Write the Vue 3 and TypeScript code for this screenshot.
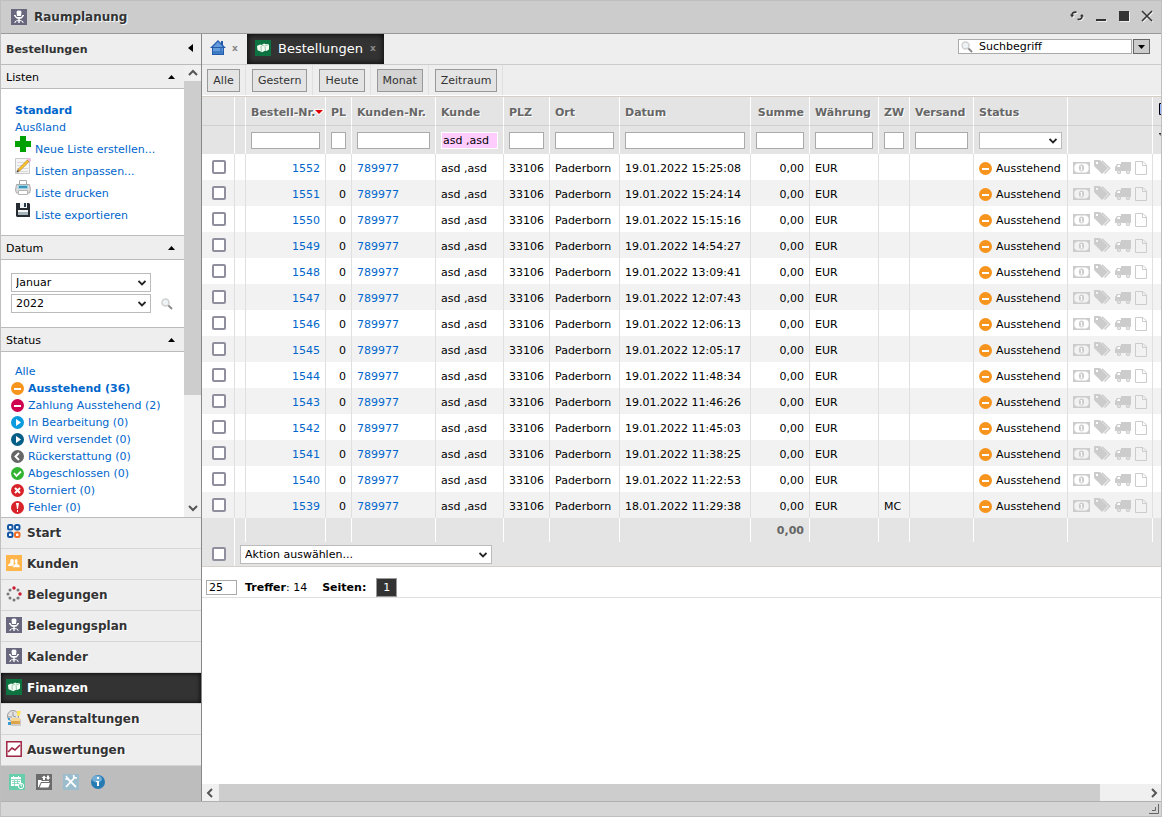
<script setup lang="ts">
import { ref } from 'vue'

interface Column {
  key: string
  label: string
  width: number
  filter: 'none' | 'text' | 'select'
}

interface Order {
  nr: number
  date: string
  payment: string
}

const columns: Column[] = [
  { key: 'check', label: '', width: 33, filter: 'none' },
  { key: 'gap', label: '', width: 11, filter: 'none' },
  { key: 'nr', label: 'Bestell-Nr.', width: 80, filter: 'text' },
  { key: 'pl', label: 'PL', width: 26, filter: 'text' },
  { key: 'customerNr', label: 'Kunden-Nr.', width: 84, filter: 'text' },
  { key: 'customer', label: 'Kunde', width: 68, filter: 'text' },
  { key: 'zip', label: 'PLZ', width: 46, filter: 'text' },
  { key: 'city', label: 'Ort', width: 70, filter: 'text' },
  { key: 'date', label: 'Datum', width: 131, filter: 'text' },
  { key: 'sum', label: 'Summe', width: 59, filter: 'text' },
  { key: 'currency', label: 'Währung', width: 69, filter: 'text' },
  { key: 'zw', label: 'ZW', width: 31, filter: 'text' },
  { key: 'shipping', label: 'Versand', width: 64, filter: 'text' },
  { key: 'status', label: 'Status', width: 94, filter: 'select' },
  { key: 'icons', label: '', width: 85, filter: 'none' },
  { key: 'config', label: '', width: 60, filter: 'none' },
]

const orders: Order[] = [
  ['19.01.2022 15:25:08', ''],
  ['19.01.2022 15:24:14', ''],
  ['19.01.2022 15:15:16', ''],
  ['19.01.2022 14:54:27', ''],
  ['19.01.2022 13:09:41', ''],
  ['19.01.2022 12:07:43', ''],
  ['19.01.2022 12:06:13', ''],
  ['19.01.2022 12:05:17', ''],
  ['19.01.2022 11:48:34', ''],
  ['19.01.2022 11:46:26', ''],
  ['19.01.2022 11:45:03', ''],
  ['19.01.2022 11:38:25', ''],
  ['19.01.2022 11:22:53', ''],
  ['18.01.2022 11:29:38', 'MC'],
].map(([date, payment], i) => ({ nr: 1552 - i, date, payment }))

const filters = ref<Record<string, string>>({ customer: 'asd ,asd' })

const listActions = [
  { icon: 'plus', label: 'Neue Liste erstellen...' },
  { icon: 'edit', label: 'Listen anpassen...' },
  { icon: 'print', label: 'Liste drucken' },
  { icon: 'save', label: 'Liste exportieren' },
]

const states = [
  { icon: 'pending', label: 'Ausstehend (36)', active: true },
  { icon: 'payment', label: 'Zahlung Ausstehend (2)' },
  { icon: 'progress', label: 'In Bearbeitung (0)' },
  { icon: 'shipped', label: 'Wird versendet (0)' },
  { icon: 'refund', label: 'Rückerstattung (0)' },
  { icon: 'done', label: 'Abgeschlossen (0)' },
  { icon: 'cancel', label: 'Storniert (0)' },
  { icon: 'error', label: 'Fehler (0)' },
]

const modules = [
  { icon: 'start', label: 'Start' },
  { icon: 'people', label: 'Kunden' },
  { icon: 'ring', label: 'Belegungen' },
  { icon: 'chair', label: 'Belegungsplan' },
  { icon: 'chair', label: 'Kalender' },
  { icon: 'cash', label: 'Finanzen', active: true },
  { icon: 'event', label: 'Veranstaltungen' },
  { icon: 'chart', label: 'Auswertungen' },
]

const ranges = ['Alle', 'Gestern', 'Heute', 'Monat', 'Zeitraum']
const tools = [
  { icon: 'schedule', label: 'Termine' },
  { icon: 'transfer', label: 'Import und Export' },
  { icon: 'settings', label: 'Einstellungen' },
  { icon: 'info', label: 'Information' },
]
const search = ref('Suchbegriff')
const pageSize = ref('25')
</script>

<template>
  <div class="window">
    <svg class="symbols" aria-hidden="true">
      <symbol id="chair" viewBox="0 0 16 16">
        <path fill="#69677d" d="M0 0h16v16H0z" />
        <path fill="#fff" d="M5.500 3Q5.700 1.600 8 1.600T10.500 3L10 7H6z" />
        <path fill="none" stroke="#fff" stroke-width="1.200" d="M3 6.600h1.200Q4.600 9 8 9t3.800-2.400H13" />
        <path fill="#fff" d="M5.500 8h5v1.600h-5zM7.300 9h1.400v5H7.300z" />
        <path fill="none" stroke="#fff" d="M4 14v-1.200Q5 11.500 8 11.500t4 1.300V14" />
      </symbol>
      <symbol id="cash" viewBox="0 0 16 16">
        <path fill="#0d7340" d="M0 0h16v16H0z" />
        <path fill="#f5fff5" d="M2 6l3-1.600 1.600.6L9 3.500l1.600.7L12.500 4l1.500.8v4.700L11.500 11l-1-.4L7 12.300l-2-1-2.500-1z" />
        <path stroke="#75b68c" stroke-width=".7" fill="none" d="M5.500 6.700L9 5M6 7l.3 4.500M10 5.500l.4 4.700M10.500 5.700L13 5" />
      </symbol>
      <symbol id="home" viewBox="0 0 16 16">
        <path fill="#245baa" d="M8 0L0 8h2v7h12V8h2l-3-3V1h-2v2z" />
        <path fill="#659ddc" d="M8 1.700L2.800 7H13L8 1.700zM3 8h10v6H3z" />
        <path fill="#3f7bc3" d="M3 11h10v3H3zM10 8h2v6h-2z" />
      </symbol>
      <symbol id="plus" viewBox="0 0 16 16"><path fill="#00a000" d="M5 0h6v5h5v6h-5v5H5v-5H0V5h5z" /></symbol>
      <symbol id="edit" viewBox="0 0 16 16">
        <path fill="#f5f5f5" stroke="#c9c9c9" d="M.5.500h14v15H.5z" />
        <path stroke="#d8d8d8" d="M2 4.500h8M2 7.500h8M2 10.500h11M5 13.500h8" />
        <path stroke="#aa8138" stroke-width="2.800" d="M3 13L13.500 2.500" />
        <path stroke="#ffc32b" stroke-width="1.800" d="M4 12L13 3" />
        <path fill="#efb9e3" d="M13 0h2l1 1v2l-1 1-3-3z" /><path fill="#444" d="M2 12l2 2-2.500.5z" />
      </symbol>
      <symbol id="print" viewBox="0 0 16 16">
        <path fill="#fff" stroke="#a8a8a8" d="M4.500.500h7V6h-7z" />
        <path fill="#ddd" stroke="#aaa" d="M1.500 4.500h13l1 5-1 3.500h-13L.5 10z" />
        <path fill="#9bd3e6" d="M3 5h10v4H3z" /><path fill="#3d93b8" d="M4 6h8v2H4z" />
        <path fill="#fff" stroke="#b5b5b5" d="M3.500 10.500h9v4h-9z" />
      </symbol>
      <symbol id="save" viewBox="0 0 16 16">
        <path fill="#252b30" d="M1 1h13l1 1v13H2l-1-1z" /><path fill="#edf2f5" d="M5 1h7v5H5z" />
        <path fill="#24384a" d="M9 1h2v4H9z" /><path fill="#a5b3bb" d="M3 8h10v5H3z" /><path fill="#f5f5f5" d="M3 8h10v2H3z" />
      </symbol>
      <symbol id="pending" viewBox="0 0 13 13"><circle cx="6.5" cy="6.5" r="6.5" fill="#f7941d" /><path fill="#fff" d="M3 6h7v2H3z" /></symbol>
      <symbol id="payment" viewBox="0 0 13 13"><circle cx="6.5" cy="6.5" r="6.5" fill="#cf004f" /><path fill="#fff" d="M3 6h7v2H3z" /></symbol>
      <symbol id="progress" viewBox="0 0 13 13"><circle cx="6.5" cy="6.5" r="6.5" fill="#0b9add" /><path fill="#fff" d="M5 3l5 3.500L5 10z" /></symbol>
      <symbol id="shipped" viewBox="0 0 13 13"><circle cx="6.5" cy="6.5" r="6.5" fill="#055f86" /><path fill="#fff" d="M5 3l5 3.500L5 10z" /></symbol>
      <symbol id="refund" viewBox="0 0 13 13"><circle cx="6.5" cy="6.5" r="6.5" fill="#666" /><path fill="none" stroke="#fff" stroke-width="2" d="M8 3L4.500 6.500 8 10" /></symbol>
      <symbol id="done" viewBox="0 0 13 13"><circle cx="6.5" cy="6.5" r="6.5" fill="#32b432" /><path fill="none" stroke="#fff" stroke-width="1.800" d="M3 6l2.500 3L10 4.500" /></symbol>
      <symbol id="cancel" viewBox="0 0 13 13"><circle cx="6.5" cy="6.5" r="6.5" fill="#d8232a" /><path stroke="#fff" stroke-width="2" d="M4 4l5 5M9 4L4 9" /></symbol>
      <symbol id="error" viewBox="0 0 13 13"><circle cx="6.5" cy="6.5" r="6.5" fill="#d8232a" /><path fill="#fff" d="M5 2h3L7 8H6zM6 9h1v2H6z" /></symbol>
      <symbol id="start" viewBox="0 0 16 16">
        <g fill="#fff" stroke-width="2"><rect x="2" y="1" width="4.500" height="4.500" rx="1.500" stroke="#1255a4" /><rect x="9" y="1" width="4.500" height="4.500" rx="1.500" stroke="#1255a4" /><rect x="2" y="8.500" width="4.500" height="4.500" rx="1.500" stroke="#1255a4" /><rect x="9" y="8.500" width="4.500" height="4.500" rx="1.500" stroke="#f36c21" /></g>
      </symbol>
      <symbol id="people" viewBox="0 0 16 16">
        <path fill="#ffb54a" d="M0 0h16v16H0z" />
        <path fill="#fff" d="M2 11q0-2.500 2.600-3Q3.500 4 6 4t1.600 4l.4 3z" />
        <path fill="#fff" stroke="#ffb54a" stroke-width=".6" d="M6.500 12.500q0-3 2.700-3.500Q7.500 4 10 3.800T11.600 9q2.700.5 2.700 3.500z" />
      </symbol>
      <symbol id="ring" viewBox="0 0 16 16">
        <g fill="#777"><circle cx="12" cy="4" r="1.500" /><circle cx="12" cy="12" r="1.600" /><circle cx="8" cy="14" r="1.500" /><circle cx="4" cy="12" r="1.500" /><circle cx="2" cy="8" r="1.500" /><circle cx="4" cy="4" r="1.500" /></g>
        <g fill="#d01831"><circle cx="8" cy="2" r="1.700" /><circle cx="14" cy="8" r="1.700" /></g>
      </symbol>
      <symbol id="event" viewBox="0 0 16 16">
        <circle cx="7" cy="6" r="5.500" fill="#e2e2e2" stroke="#999" /><path fill="none" stroke="#999" d="M7 2v4l3 1M2 7h4" />
        <path fill="#ffe359" d="M10.500 1H15l-1.500 5h-2z" /><path fill="#dea44a" d="M5 8h9v6H5z" /><path fill="#f5d897" d="M5 8h9v3H5z" />
        <path fill="#389cd1" d="M2 8h2v2H2zM2 12h3v3H2z" /><path fill="#ccc" d="M5 14h10v2H5zM14 9h1v5h-1z" />
      </symbol>
      <symbol id="chart" viewBox="0 0 16 16"><path fill="#fff" stroke="#9e2543" stroke-width="1.500" d="M.8.800h14.400v14.400H.8z" /><path fill="none" stroke="#9e2543" stroke-width="1.600" d="M2 11l4-4 3 2 5-5" /></symbol>
      <symbol id="schedule" viewBox="0 0 16 16">
        <path fill="#66ceab" d="M0 0h16v16H0z" /><path fill="#fff" d="M2 3h2V2h1v1h4V2h1v1h2v6h-2v3H2z" />
        <path stroke="#66ceab" stroke-width=".7" d="M2 5.500h10M3 7.500h8M3 9.500h7M5.500 6v6M8.500 6v4" /><circle cx="12" cy="12" r="2.700" fill="#66ceab" stroke="#fff" /><path fill="none" stroke="#fff" d="M12 10v2h1" />
      </symbol>
      <symbol id="transfer" viewBox="0 0 16 16">
        <path fill="#6b6b6b" d="M0 0h16v16H0z" />
        <path fill="#fff" d="M2 6h3l1 1h7v1H5l-2 4v1H2zM5.500 9H14l-1.600 4.500H3.600zM7 6V4H5.500L8 1.500 10.500 4H9v2zM11 1.500h2v2h1.500L12 6 9.700 3.500H11z" />
      </symbol>
      <symbol id="settings" viewBox="0 0 16 16">
        <path fill="#9bbccd" d="M0 0h16v16H0z" /><path stroke="#fff" stroke-width="1.800" d="M4 4l9 9M12 3l-9 10" /><path fill="none" stroke="#fff" stroke-width="1.600" d="M3 2l1.500 2-2 1.500M14 4l-3-.5L10.500 1" />
      </symbol>
      <symbol id="info" viewBox="0 0 16 16"><circle cx="8" cy="8" r="7" fill="#277bb3" /><ellipse cx="7" cy="5" rx="5" ry="3.500" fill="#72add6" /><path fill="#fff" d="M7 3h2v2H7zM6 7h3v5H7V8H6z" /></symbol>
      <symbol id="lens" viewBox="0 0 12 12"><path stroke="#888" stroke-width="1.800" d="M7 7l4 4" /><circle cx="4.500" cy="4.500" r="3.500" fill="#eef3f5" stroke="#d0d0d0" stroke-width="1.500" /></symbol>
      <symbol id="chevron" viewBox="0 0 8 6"><path fill="none" stroke="currentColor" stroke-width="1.800" d="M.5 1L4 4.500 7.500 1" /></symbol>
      <symbol id="note" viewBox="0 0 17 12">
        <path fill="none" stroke="#ccc" stroke-width="1.400" d="M.7.700h15.600v10.600H.7z" /><path fill="#ccc" d="M1 1h3L1 4zM16 1v3l-3-3zM1 8l3 3H1zM16 8v3h-3z" /><ellipse cx="8.5" cy="6" rx="2.600" ry="3.400" fill="#ccc" /><path stroke="#fff" d="M8.500 4v4M7.500 8h2M7.500 4.500h1" />
      </symbol>
      <symbol id="tag" viewBox="0 0 17 14">
        <path fill="#ccc" fill-rule="evenodd" d="M0 0h6l8 8-6 6-8-8zM2 2v2h2V2z" /><path fill="none" stroke="#ccc" stroke-width="1.400" d="M8 .700l7.700 7.500-5.200 5.300" />
      </symbol>
      <symbol id="truck" viewBox="0 0 16 12">
        <path fill="#ccc" d="M6 0h10v9h-1a2.400 2.400 0 0 0-4 0H6a2.400 2.400 0 0 0-4 0H0V5l2-3h4z" /><path fill="#fff" d="M2 5l1-2h2v2z" /><g fill="none" stroke="#ccc" stroke-width="1.300"><circle cx="4" cy="10" r="1.500" /><circle cx="13" cy="10" r="1.500" /></g>
      </symbol>
      <symbol id="page" viewBox="0 0 12 14"><path fill="none" stroke="#ccc" d="M.5.500H8l3.500 3.500v9.500H.5zM7.500.500v4h4" /></symbol>
    </svg>

    <header class="titlebar">
      <svg class="i16"><use href="#chair" /></svg>
      <h1>Raumplanung</h1>
      <div class="window-buttons">
        <button type="button" aria-label="Aktualisieren">
          <svg width="14" height="12" viewBox="0 0 14 12"><path fill="none" stroke="#333" stroke-width="1.600" d="M6.500 2.200Q1.500 1.600 2 6M7.500 9.300Q12.500 10 12 5.500" /><path fill="#333" d="M0 4.500l4.200.3L2 7.500zM14 6.500l-4.200-.3L12 4z" /></svg>
        </button>
        <button type="button" aria-label="Minimieren"><svg width="12" height="12"><path fill="#333" d="M1 9h10v2H1z" /></svg></button>
        <button type="button" aria-label="Maximieren"><svg width="12" height="12"><path fill="#333" d="M1 1h10v10H1z" /></svg></button>
        <button type="button" aria-label="Schließen"><svg width="12" height="12"><path stroke="#333" stroke-width="1.500" d="M1 1l10 10M11 1L1 11" /></svg></button>
      </div>
    </header>

    <div class="workspace">
      <aside class="sidebar">
        <div class="side-title">
          <h2>Bestellungen</h2>
          <button type="button" aria-label="Seitenleiste einklappen"><svg width="5" height="8"><path d="M5 0v8L0 4z" /></svg></button>
        </div>
        <div class="side-scroll">
          <div class="side-content">
            <section>
              <h3>Listen <svg width="7" height="4"><path d="M0 4h7L3.500 0z" /></svg></h3>
              <div class="lists">
                <a href="#" class="plain strong">Standard</a>
                <a href="#" class="plain">Ausßland</a>
                <a v-for="a in listActions" :key="a.icon" href="#" class="action">
                  <svg class="i16"><use :href="'#' + a.icon" /></svg><span>{{ a.label }}</span>
                </a>
              </div>
            </section>
            <section>
              <h3>Datum <svg width="7" height="4"><path d="M0 4h7L3.500 0z" /></svg></h3>
              <div class="dates">
                <div class="select month">
                  <select aria-label="Monat"><option>Januar</option></select>
                  <svg class="chev"><use href="#chevron" /></svg>
                </div>
                <div class="select year">
                  <select aria-label="Jahr"><option>2022</option></select>
                  <svg class="chev"><use href="#chevron" /></svg>
                </div>
                <button type="button" class="lens-button" aria-label="Suchen"><svg class="i12"><use href="#lens" /></svg></button>
              </div>
            </section>
            <section>
              <h3>Status <svg width="7" height="4"><path d="M0 4h7L3.500 0z" /></svg></h3>
              <div class="states">
                <a href="#" class="all">Alle</a>
                <a v-for="s in states" :key="s.icon" href="#" :class="{ strong: s.active }">
                  <svg class="i13"><use :href="'#' + s.icon" /></svg><span>{{ s.label }}</span>
                </a>
              </div>
            </section>
          </div>
          <div class="vbar" aria-hidden="true">
            <svg width="10" height="7"><path fill="none" stroke="#555" stroke-width="2" d="M1 6l4-4 4 4" /></svg>
            <div class="vtrack"><div class="vthumb"></div></div>
            <svg width="10" height="7"><path fill="none" stroke="#555" stroke-width="2" d="M1 1l4 4 4-4" /></svg>
          </div>
        </div>
        <nav class="modules">
          <a v-for="m in modules" :key="m.label" href="#" :class="{ active: m.active }">
            <svg class="i16"><use :href="'#' + m.icon" /></svg><span>{{ m.label }}</span>
          </a>
        </nav>
        <div class="tools">
          <button v-for="t in tools" :key="t.icon" type="button" :aria-label="t.label"><svg class="i16"><use :href="'#' + t.icon" /></svg></button>
        </div>
      </aside>

      <main class="main">
        <div class="tabs">
          <div class="tab home">
            <a href="#" aria-label="Startseite"><svg class="i16"><use href="#home" /></svg></a>
            <button type="button" aria-label="Startseite schließen">x</button>
          </div>
          <div class="tab current">
            <svg class="i16"><use href="#cash" /></svg>
            <a href="#">Bestellungen</a>
            <button type="button" aria-label="Bestellungen schließen">x</button>
          </div>
          <div class="search">
            <label class="search-box">
              <svg class="i12"><use href="#lens" /></svg>
              <input v-model="search" type="text" aria-label="Suchbegriff" />
            </label>
            <button type="button" aria-label="Suchoptionen"><svg width="7" height="4"><path d="M0 0h7L3.500 4z" /></svg></button>
          </div>
        </div>
        <div class="ranges">
          <div v-for="r in ranges" :key="r" class="range"><button type="button" :class="{ pressed: r === 'Monat' }">{{ r }}</button></div>
        </div>

        <div class="grid">
          <table>
            <colgroup><col v-for="c in columns" :key="c.key" :style="{ width: c.width + 'px' }" /></colgroup>
            <thead>
              <tr class="labels">
                <th v-for="c in columns" :key="c.key" :class="{ right: c.key === 'sum' }">
                  {{ c.label }}
                  <svg v-if="c.key === 'nr'" class="sort" width="10" height="6"><path fill="#fff" d="M0 0h10v2L5 6 0 2z" /><path fill="#d00" d="M1 1h8L5 5z" /></svg>
                  <svg v-if="c.key === 'config'" class="config-icon" width="14" height="14"><path fill="#99b5ff" stroke="#001" d="M1.500 1.500h11v11h-11z" /></svg>
                </th>
              </tr>
              <tr class="filters">
                <td v-for="c in columns" :key="c.key">
                  <input v-if="c.filter === 'text'" v-model="filters[c.key]" type="text" :aria-label="c.label + ' filtern'" :class="{ filled: filters[c.key] }" />
                  <div v-else-if="c.filter === 'select'" class="select">
                    <select aria-label="Status filtern"><option></option></select>
                    <svg class="chev"><use href="#chevron" /></svg>
                  </div>
                  <svg v-else-if="c.key === 'config'" class="funnel" width="12" height="14"><path fill="none" stroke="#333" d="M0 .500h11L7 5v6H5V5z" /></svg>
                </td>
              </tr>
            </thead>
            <tbody>
              <tr v-for="o in orders" :key="o.nr">
                <td class="check"><input type="checkbox" :aria-label="'Bestellung ' + o.nr + ' auswählen'" /></td>
                <td></td>
                <td class="right"><a href="#">{{ o.nr }}</a></td>
                <td class="right">0</td>
                <td><a href="#">789977</a></td>
                <td>asd ,asd</td>
                <td>33106</td>
                <td>Paderborn</td>
                <td>{{ o.date }}</td>
                <td class="right">0,00</td>
                <td>EUR</td>
                <td>{{ o.payment }}</td>
                <td></td>
                <td><div class="state"><svg class="i13"><use href="#pending" /></svg>Ausstehend</div></td>
                <td>
                  <div class="marks">
                    <svg width="17" height="12"><use href="#note" /></svg>
                    <svg class="tagmark" width="17" height="14"><use href="#tag" /></svg>
                    <svg width="16" height="12"><use href="#truck" /></svg>
                    <svg width="12" height="14"><use href="#page" /></svg>
                  </div>
                </td>
                <td></td>
              </tr>
            </tbody>
            <tfoot>
              <tr class="total">
                <td v-for="c in columns" :key="c.key" class="right">{{ c.key === 'sum' ? '0,00' : '' }}</td>
              </tr>
              <tr class="bulk">
                <td class="check"><input type="checkbox" aria-label="Alle auswählen" /></td>
                <td colspan="15">
                  <div class="select">
                    <select aria-label="Aktion"><option>Aktion auswählen...</option></select>
                    <svg class="chev"><use href="#chevron" /></svg>
                  </div>
                </td>
              </tr>
            </tfoot>
          </table>
        </div>

        <div class="pager">
          <input v-model="pageSize" type="text" aria-label="Treffer pro Seite" />
          <span><b>Treffer</b>: 14</span>
          <span class="pages"><b>Seiten:</b></span>
          <button type="button">1</button>
        </div>

        <div class="hbar" aria-hidden="true">
          <svg width="7" height="10"><path fill="none" stroke="#555" stroke-width="2" d="M6 1L2 5l4 4" /></svg>
          <div class="htrack"><div class="hthumb"></div></div>
          <svg width="7" height="10"><path fill="none" stroke="#555" stroke-width="2" d="M1 1l4 4-4 4" /></svg>
        </div>
      </main>
    </div>

    <footer class="statusbar">
      <svg width="10" height="10"><path fill="none" stroke="#666" d="M0 9.500h9.500V0M3 6.500h3.500V3" /></svg>
    </footer>
  </div>
</template>

<style>
body {
  margin: 0;
  background: #fff;
}
</style>

<style scoped>
* {
  box-sizing: border-box;
}
.window {
  display: flex;
  flex-direction: column;
  height: 100vh;
  border: 1px solid #bfbfbf;
  overflow: hidden;
  font: 11px/17px "DejaVu Sans", Verdana, sans-serif;
  color: #000;
  background: #fff;
}
.symbols {
  position: absolute;
  width: 0;
  height: 0;
}
svg {
  display: block;
  flex: none;
}
.i16 { width: 16px; height: 16px; }
.i13 { width: 13px; height: 13px; }
.i12 { width: 12px; height: 12px; }
h1, h2, h3 {
  margin: 0;
}
a {
  color: #06c;
  text-decoration: none;
}
button, input, select {
  font: inherit;
  color: inherit;
  margin: 0;
}
button {
  padding: 0;
  border: 0;
  background: none;
}
.titlebar {
  display: flex;
  align-items: center;
  gap: 7px;
  height: 33px;
  flex: none;
  padding: 0 8px 0 10px;
  border-bottom: 1px solid #999;
  background: #ccc;
}
.titlebar h1 {
  font-size: 12px;
  color: #333;
  text-shadow: 1px 1px 1px #fff;
}
.window-buttons {
  display: flex;
  align-items: center;
  gap: 11px;
  margin-left: auto;
  padding-bottom: 3px;
}
.window-buttons svg {
  filter: drop-shadow(1px 1px 0 #eee);
}
.workspace {
  display: flex;
  flex: 1;
  min-height: 0;
}
.sidebar {
  display: flex;
  flex-direction: column;
  width: 201px;
  flex: none;
  border-right: 1px solid #888;
}
.side-title {
  display: flex;
  align-items: center;
  justify-content: space-between;
  height: 31px;
  flex: none;
  padding: 1px 8px 0 5px;
  border-bottom: 1px solid #bbb;
  background: #eee;
}
.side-title h2 {
  font-size: 11px;
  color: #333;
}
.side-title button {
  padding-bottom: 3px;
}
.side-scroll {
  display: flex;
  flex: 1;
  min-height: 0;
}
.side-content {
  flex: 1;
  overflow: hidden;
}
h3 {
  display: flex;
  align-items: center;
  justify-content: space-between;
  height: 24px;
  padding: 1px 9px 0 5px;
  border-bottom: 1px solid #bbb;
  background: #eee;
  font-size: 11px;
  font-weight: normal;
}
section + section h3 {
  height: 25px;
  border-top: 1px solid #bbb;
}
.lists {
  display: flex;
  flex-direction: column;
  align-items: flex-start;
  padding: 13px 14px 11px;
}
.strong {
  font-weight: bold;
}
.action {
  display: flex;
  gap: 4px;
  height: 22px;
}
.action span {
  padding-top: 5px;
}
.dates {
  display: grid;
  grid-template-columns: 140px 12px;
  gap: 2px 10px;
  align-items: center;
  padding: 13px 10px 14px;
}
.month, .year {
  grid-column: 1;
}
.lens-button {
  grid-area: 2 / 2;
}
.select {
  position: relative;
}
.select select {
  display: block;
  width: 100%;
  height: 19px;
  padding: 0 4px;
  border: 1px solid #bbb;
  border-radius: 0;
  appearance: none;
  background: #fff;
  line-height: 17px;
}
.chev {
  position: absolute;
  right: 5px;
  top: 7px;
  width: 8px;
  height: 6px;
  color: #222;
  pointer-events: none;
}
.states {
  display: flex;
  flex-direction: column;
  padding: 11px 10px 0;
}
.states a {
  display: flex;
  align-items: center;
  gap: 4px;
  height: 17px;
  white-space: nowrap;
}
.states .all {
  padding-left: 4px;
}
.vbar {
  display: flex;
  flex-direction: column;
  align-items: center;
  width: 17px;
  padding: 4px 0 5px;
  background: #f0f0f0;
}
.vtrack {
  flex: 1;
  width: 100%;
  padding: 5px 0;
}
.vthumb {
  height: 75%;
  background: #cdcdcd;
}
.modules {
  flex: none;
  border-top: 1px solid #bbb;
}
.modules a {
  display: flex;
  gap: 5px;
  height: 31px;
  padding: 6px 5px 0;
  border-bottom: 1px solid #d5d5d5;
  background: #eee;
  color: #333;
  font-size: 12px;
  font-weight: bold;
  line-height: 18px;
  text-shadow: 1px 1px 1px #fff;
}
.modules .active {
  background: #333;
  color: #fff;
  text-shadow: none;
  box-shadow: inset 0 0 5px #000;
}
.tools {
  display: flex;
  align-items: flex-start;
  gap: 11px;
  height: 35px;
  flex: none;
  padding: 8px;
  background: #bdbdbd;
}
.main {
  display: flex;
  flex-direction: column;
  flex: 1;
  min-width: 0;
}
.tabs {
  display: flex;
  height: 31px;
  flex: none;
  border-bottom: 1px solid #ccc;
  background: #eee;
}
.tab {
  display: flex;
  align-items: center;
  padding-bottom: 2px;
}
.tab button {
  color: #888;
  font-size: 9px;
  font-weight: bold;
}
.home {
  gap: 6px;
  width: 45px;
  padding-left: 8px;
}
.current {
  gap: 7px;
  padding-left: 8px;
  padding-right: 8px;
  background: #333;
  color: #fff;
  box-shadow: inset 0 0 6px #000;
}
.current a {
  color: #fff;
  font-size: 13px;
}
.search {
  display: flex;
  align-items: flex-start;
  gap: 1px;
  margin-left: auto;
  padding: 5px 11px 0 0;
}
.search-box {
  display: flex;
  align-items: center;
  width: 174px;
  height: 15px;
  padding-left: 2px;
  border: 1px solid #aaa;
  background: #fff;
}
.search-box input {
  flex: 1;
  min-width: 0;
  height: 13px;
  padding: 0 0 0 6px;
  border: 0;
  background: none;
}
.search button {
  display: grid;
  place-items: center;
  width: 17px;
  height: 15px;
  border: 1px solid #666;
  background: #ccc;
}
.ranges {
  display: flex;
  height: 30px;
  flex: none;
  background: #eee;
}
.range {
  padding: 4px 5px 0;
  border-right: 1px solid #e0e0e0;
}
.range + .range {
  padding-left: 6px;
}
.ranges button {
  height: 23px;
  min-width: 33px;
  padding: 0 5px;
  border: 1px solid #999;
  background: #e4e4e4;
  color: #333;
}
.ranges .pressed {
  background: #d4d4d4;
}
.grid {
  flex: none;
  overflow: hidden;
  border-top: 1px solid #fff;
}
table {
  width: 1011px;
  table-layout: fixed;
  border-collapse: separate;
  border-spacing: 0;
  border-top: 1px solid #d4d0c8;
  border-bottom: 1px solid #d4d0c8;
}
th, td {
  padding: 0 5px;
  border-right: 1px solid #e0e0e0;
  white-space: nowrap;
  text-align: left;
  vertical-align: middle;
}
th {
  position: relative;
  height: 29px;
  padding-top: 2px;
  border-bottom: 1px solid #d0cfcc;
  color: #666;
  text-shadow: 1px 1px 0 #fff;
}
thead th, thead td, tfoot td {
  border-right-color: #fff;
  background: #e4e4e4;
}
.right {
  text-align: right;
}
.sort {
  position: absolute;
  right: 1px;
  top: 12px;
}
.config-icon {
  position: absolute;
  left: 5px;
  top: 5px;
}
.filters td {
  height: 28px;
}
.filters input, .pager input {
  display: block;
  width: 100%;
  height: 17px;
  padding: 0 1px;
  border: 1px solid #aaa;
  background: #fff;
}
.filters .filled {
  border-color: #fff;
  background: #fcf;
}
.filters select {
  height: 17px;
}
.filters .chev {
  top: 6px;
}
.funnel {
  margin-left: 1px;
}
tbody td {
  height: 26px;
  padding-top: 2px;
}
tbody tr:nth-child(even) {
  background: #f2f2f2;
}
.check {
  padding: 0 0 0 10px;
}
.check input {
  display: block;
  width: 14px;
  height: 14px;
  border: 2px solid #8f8f9d;
  border-radius: 2px;
  appearance: none;
  background: #fff;
}
.state {
  display: flex;
  align-items: center;
  gap: 4px;
}
.marks {
  display: flex;
  align-items: center;
  gap: 4px;
}
.tagmark {
  margin-bottom: 2px;
}
.total td {
  height: 24px;
  padding-top: 1px;
  color: #666;
  font-weight: bold;
}
.bulk td {
  height: 24px;
}
.bulk .select {
  width: 252px;
}
.pager {
  display: flex;
  align-items: center;
  gap: 8px;
  height: 31px;
  flex: none;
  padding: 10px 4px 0;
  border-bottom: 1px solid #e0e0e0;
}
.pager input {
  width: 31px;
  height: 15px;
  padding: 0 2px;
}
.pages {
  padding: 0 2px 0 7px;
}
.pager button {
  width: 21px;
  height: 19px;
  border: 1px solid #999;
  background: #333;
  color: #fff;
}
.hbar {
  display: flex;
  align-items: center;
  height: 17px;
  margin-top: auto;
  padding: 0 3px 0 4px;
  background: #f0f0f0;
}
.htrack {
  flex: 1;
  height: 17px;
  padding: 0 5px 0 6px;
}
.hthumb {
  width: 95%;
  height: 17px;
  background: #cdcdcd;
}
.statusbar {
  display: flex;
  align-items: center;
  justify-content: flex-end;
  height: 15px;
  flex: none;
  padding-right: 2px;
  border-top: 1px solid #b0b0b0;
  background: #d6d6d6;
}
</style>
